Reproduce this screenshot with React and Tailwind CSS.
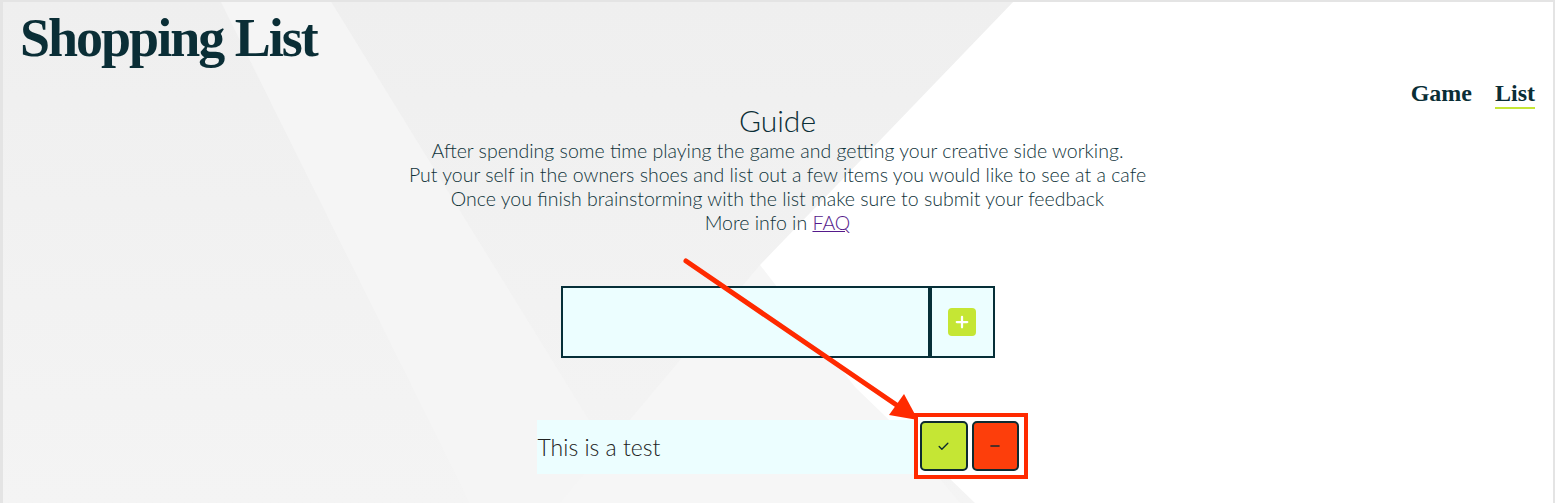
import React from "react";
import { Check, Minus, Plus } from "lucide-react";

const ink = "text-[#0a2e36]";

const Background = () => (
  <div className="pointer-events-none absolute inset-0">
    <div className="absolute inset-0 bg-gradient-to-b from-[#efefef] to-[#f4f4f4]" />
    <div className="absolute inset-0 bg-[#f5f5f5] [clip-path:polygon(220px_0,330px_0,640px_503px,470px_503px)]" />
    <div className="absolute inset-0 bg-[#f6f6f6] [clip-path:polygon(560px_503px,760px_265px,960px_503px)]" />
    <div className="absolute inset-0 bg-white [clip-path:polygon(1015px_0,100%_0,100%_100%,975px_100%,855px_387px,760px_265px)]" />
  </div>
);

const Arrow = () => (
  <svg
    className="pointer-events-none absolute left-0 top-0 z-30"
    width="1555"
    height="503"
    viewBox="0 0 1555 503"
  >
    <line x1="686" y1="261" x2="898" y2="406" stroke="#ff2a00" strokeWidth="5" strokeLinecap="round" />
    <polygon points="918,420 889,415 904,394" fill="#ff2a00" />
  </svg>
);

export default function App() {
  return (
    <div className="relative h-[503px] w-full overflow-hidden font-['Lato',sans-serif]">
      <Background />
      <div className="pointer-events-none absolute inset-0 z-20 border-l-[3px] border-r-2 border-t-2 border-[#e4e4e4]" />

      <div className="relative z-10 flex flex-col pl-[20px] pr-[20px] pt-[11px]">
        <header className="flex items-start justify-between">
          <h1 className={`font-['Liberation_Serif',serif] text-[54px] font-bold leading-none tracking-[-2px] ${ink}`}>
            Shopping List
          </h1>
          <nav className={`mt-[70px] flex gap-[23px] font-['Liberation_Serif',serif] text-[24px] font-bold leading-none ${ink}`}>
            <a href="#">Game</a>
            <a href="#" className="underline decoration-[#c5e634] decoration-2 underline-offset-[6px]">
              List
            </a>
          </nav>
        </header>

        <section className={`flex flex-col items-center text-center font-light ${ink}`}>
          <h2 className="text-[30px] leading-[30px]">Guide</h2>
          <div className="mt-[4px] text-[19.5px] leading-[24px] text-[#0f333a]">
            <p>After spending some time playing the game and getting your creative side working.</p>
            <p>Put your self in the owners shoes and list out a few items you would like to see at a cafe</p>
            <p>Once you finish brainstorming with the list make sure to submit your feedback</p>
            <p>
              More info in{" "}
              <a href="#" className="text-[#551a8b] underline">
                FAQ
              </a>
            </p>
          </div>
        </section>

        <form className="mx-auto mt-[51px] flex" onSubmit={(e) => e.preventDefault()}>
          <input
            type="text"
            className="h-[72px] w-[369px] border-2 border-[#062f38] bg-cyan-50 px-3 text-[20px] outline-none"
          />
          <button
            type="submit"
            className="flex h-[72px] w-[65px] items-center justify-center border-2 border-[#062f38] bg-cyan-50"
          >
            <span className="flex h-[28px] w-[28px] items-center justify-center rounded-[4px] bg-[#c5e634] text-white">
              <Plus size={18} strokeWidth={3} />
            </span>
          </button>
        </form>

        <ul className="mx-auto mt-[62px] w-[482px]">
          <li className="relative flex items-start">
            <div className="flex h-[54px] w-[383px] items-center bg-cyan-50 pl-[1px] text-[23px] font-light text-[#222]">
              This is a test
            </div>
            <div className="pointer-events-none absolute left-[377px] top-[-7px] h-[66px] w-[114px] border-4 border-[#ff2a00] bg-white" />
            <div className="relative z-10 mt-[1px] flex gap-[4px]">
              <button className="flex h-[50px] w-[48px] items-center justify-center rounded-[5px] border-2 border-[#0d2a30] bg-[#c5e634] text-[#0d2a30]">
                <Check size={13} strokeWidth={2.5} />
              </button>
              <button className="flex h-[50px] w-[47px] items-center justify-center rounded-[5px] border-2 border-[#0d2a30] bg-[#fd3e0b] text-[#1a2a2e]">
                <Minus size={14} strokeWidth={2.5} />
              </button>
            </div>
          </li>
        </ul>
      </div>

      <Arrow />
    </div>
  );
}
